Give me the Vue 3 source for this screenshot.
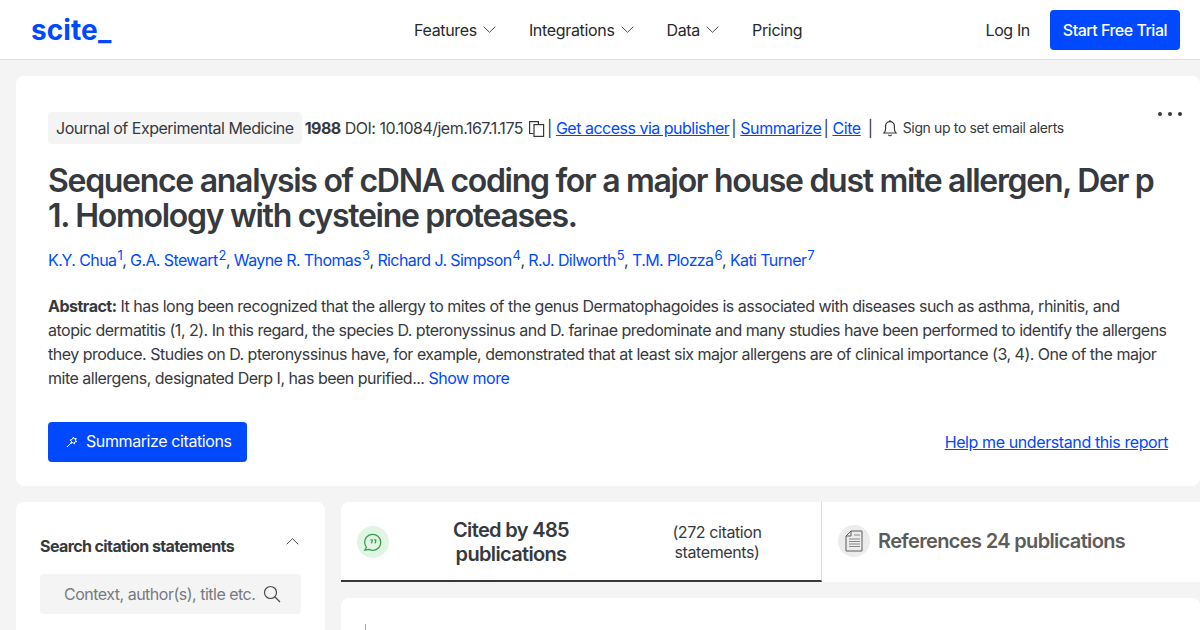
<template>
  <div class="page">
    <header class="topbar">
      <div class="logo">scite_</div>
      <nav class="nav">
        <a v-for="item in navItems" :key="item.label" class="nav-item">
          {{ item.label }}
          <svg v-if="item.menu" width="13" height="7" viewBox="0 0 13 7" fill="none" stroke="#47494d" stroke-width="1">
            <path d="M.7.7l5.8 5.6L12.3.7" />
          </svg>
        </a>
      </nav>
      <div class="topbar-actions">
        <a class="login">Log In</a>
        <a class="trial">Start Free Trial</a>
      </div>
    </header>

    <main class="content">
      <section class="card paper">
        <div class="more"><span></span><span></span><span></span></div>
        <div class="meta">
          <span class="journal">Journal of Experimental Medicine</span>
          <b class="year">1988</b>
          <span class="doi">DOI: 10.1084/jem.167.1.175</span>
          <svg class="copy" width="17" height="17" viewBox="0 0 17 17" fill="none" stroke="#36393e" stroke-width="1.2">
            <path d="M5.5 13.5H1.6V1.6h8.8V4.5" />
            <rect x="6" y="4.6" width="9.6" height="11.8" />
          </svg>
          <span class="sep">|</span>
          <a class="link access">Get access via publisher</a>
          <span class="sep">|</span>
          <a class="link">Summarize</a>
          <span class="sep">|</span>
          <a class="link">Cite</a>
          <span class="sep wide">|</span>
          <svg class="bell" width="16" height="18" viewBox="0 0 16 18" fill="none" stroke="#36393e" stroke-width="1.2">
            <path d="M2 14c1.2-1.2 1.6-2.4 1.6-4.6V7a4.4 4.4 0 0 1 8.8 0v2.4c0 2.2.4 3.4 1.6 4.6z" />
            <path d="M8 1v1.4M6.4 15.6a1.7 1.7 0 0 0 3.2 0" />
          </svg>
          <span class="alerts">Sign up to set email alerts</span>
        </div>

        <h1 class="title">Sequence analysis of cDNA coding for a major house dust mite allergen, Der p 1. Homology with cysteine proteases.</h1>

        <div class="authors">
          <template v-for="(author, index) in authors" :key="author">
            <a class="author">{{ author }}</a><sup>{{ index + 1 }}</sup><span v-if="index < authors.length - 1" class="comma">, </span>
          </template>
        </div>

        <p class="abstract">
          <b>Abstract:</b> It has long been recognized that the allergy to mites of the genus Dermatophagoides is associated with diseases such as asthma, rhinitis, and<br />
          atopic dermatitis (1, 2). In this regard, the species D. pteronyssinus and D. farinae predominate and many studies have been performed to identify the allergens<br />
          they produce. Studies on D. pteronyssinus have, for example, demonstrated that at least six major allergens are of clinical importance (3, 4). One of the major<br />
          mite allergens, designated Derp I, has been purified... <a class="show-more">Show more</a>
        </p>

        <div class="paper-actions">
          <button class="summarize">
            <svg width="13" height="13" viewBox="0 0 13 13" fill="none" stroke="#fff" stroke-width="1">
              <path d="M1 12l5-5" />
              <path d="M7.5 2l.6 1.9 2.2-.5-1 1.9 1.6 1.3-2.1.3-.4 2-1.5-1.4-1.9.8.5-2-1.5-1.3 2-.4z" />
            </svg>
            Summarize citations
          </button>
          <a class="help">Help me understand this report</a>
        </div>
      </section>

      <div class="lower">
        <aside class="card search-card">
          <div class="search-head">
            <span>Search citation statements</span>
            <svg width="13" height="7" viewBox="0 0 13 7" fill="none" stroke="#47494d" stroke-width="1">
              <path d="M.7 6.3L6.5.7l5.8 5.6" />
            </svg>
          </div>
          <div class="search-box">
            <span>Context, author(s), title etc.</span>
            <svg width="18" height="18" viewBox="0 0 18 18" fill="none" stroke="#47494d" stroke-width="1.2">
              <circle cx="7.5" cy="7.5" r="6" />
              <path d="M12 12l5 5" />
            </svg>
          </div>
        </aside>

        <div class="results">
          <div class="tabs">
            <div class="tab active">
              <span class="tab-icon green">
                <svg width="20" height="20" viewBox="0 0 20 20" fill="none" stroke="#2f9e44" stroke-width="1.2">
                  <path d="M3.4 15.2A8 8 0 1 1 6 17.4l-4.2.8z" />
                  <path d="M7.6 7.8h1.6v1c0 1.2-.3 1.9-1 2.5M11.2 7.8h1.6v1c0 1.2-.3 1.9-1 2.5" />
                </svg>
              </span>
              <span class="tab-title">Cited by 485 publications</span>
              <span class="tab-note">(272 citation statements)</span>
            </div>
            <div class="tab">
              <span class="tab-icon grey">
                <svg width="18" height="22" viewBox="0 0 18 22" fill="none" stroke="#5c5c5c" stroke-width="1">
                  <path d="M6 1h11v20H1V6z" />
                  <path d="M6 1v5H1" />
                  <path d="M9 5h6M4 9h11M4 11.5h11M4 14h11M4 16.5h11" stroke-width="1.2" stroke="#888" />
                </svg>
              </span>
              <span class="tab-title muted">References 24 publications</span>
            </div>
          </div>
          <div class="card statements">
            <span class="tick"></span>
          </div>
        </div>
      </div>
    </main>
  </div>
</template>

<script setup>
const navItems = [
  { label: 'Features', menu: true },
  { label: 'Integrations', menu: true },
  { label: 'Data', menu: true },
  { label: 'Pricing', menu: false }
];

const authors = [
  'K.Y. Chua',
  'G.A. Stewart',
  'Wayne R. Thomas',
  'Richard J. Simpson',
  'R.J. Dilworth',
  'T.M. Plozza',
  'Kati Turner'
];
</script>

<style>
html,
body {
  margin: 0;
  overflow: hidden;
}
</style>

<style scoped>
.page {
  width: 1200px;
  height: 630px;
  overflow: hidden;
  background: #f4f4f4;
  color: #36393e;
  font-family: Inter, "Noto Sans", sans-serif;
  font-size: 16px;
  letter-spacing: -0.4px;
}

.topbar {
  display: flex;
  align-items: center;
  height: 59px;
  padding: 0 20px 0 31px;
  background: #fff;
  border-bottom: 1px solid #ddd;
}

.logo {
  flex: 0 0 383px;
  color: #0049ff;
  font-size: 28px;
  font-weight: 700;
  letter-spacing: 0.1px;
}

.nav {
  display: flex;
  gap: 33px;
}

.nav-item {
  display: flex;
  align-items: center;
  gap: 6px;
  color: #27292d;
  letter-spacing: -0.33px;
}

.topbar-actions {
  display: flex;
  align-items: center;
  gap: 20px;
  margin-left: auto;
}

.login {
  color: #27292d;
}

.trial {
  padding: 10px 13px;
  border-radius: 4px;
  background: #0049ff;
  color: #fff;
  font-weight: 500;
  letter-spacing: -0.5px;
}

.content {
  padding: 16px 0 0 16px;
}

.card {
  background: #fff;
  border-radius: 8px;
}

.paper {
  position: relative;
  height: 410px;
  padding: 36px 32px 0;
  box-sizing: border-box;
}

.more {
  position: absolute;
  top: 36px;
  right: 18px;
  display: flex;
  gap: 6px;
}

.more span {
  width: 4px;
  height: 4px;
  border-radius: 50%;
  background: #36393e;
}

.meta {
  display: flex;
  align-items: center;
  white-space: nowrap;
  line-height: 32px;
}

.journal {
  padding: 0 8px;
  border-radius: 4px;
  background: #f4f4f4;
  letter-spacing: -0.5px;
}

.year {
  margin-left: 3px;
  letter-spacing: -0.5px;
}

.doi {
  margin-left: 4px;
  letter-spacing: -0.5px;
}

.copy {
  margin-left: 5px;
}

.sep {
  margin: 0 2px;
}

.sep.wide {
  margin: 0 9px 0 7px;
}

.link {
  margin-left: 2px;
  color: #0049ff;
  text-decoration: underline;
}

.link.access {
  letter-spacing: -0.5px;
}

.alerts {
  margin-left: 5px;
  font-size: 14px;
  letter-spacing: -0.35px;
}

.title {
  margin: 19px 0 0;
  font-size: 32px;
  line-height: 35px;
  font-weight: 600;
  letter-spacing: -1.3px;
}

.authors {
  margin-top: 15px;
  line-height: 24px;
  color: #36393e;
  letter-spacing: -0.6px;
}

.author {
  color: #0049ff;
}

sup {
  margin-left: 1px;
  color: #0049ff;
  font-size: 13px;
  line-height: 0;
}

.abstract {
  margin: 22px 0 0;
  line-height: 24px;
  letter-spacing: -0.5px;
  white-space: nowrap;
}

.show-more {
  color: #0049ff;
}

.paper-actions {
  display: flex;
  align-items: center;
  justify-content: space-between;
  margin-top: 32px;
}

.summarize {
  display: flex;
  align-items: center;
  gap: 7px;
  height: 40px;
  padding: 0 15px 2px 18px;
  border: 0;
  border-radius: 4px;
  background: #0049ff;
  color: #fff;
  font: inherit;
  letter-spacing: inherit;
}

.help {
  color: #0049ff;
  text-decoration: underline;
}

.lower {
  display: flex;
  gap: 16px;
  margin-top: 16px;
}

.search-card {
  flex: none;
  width: 309px;
  height: 200px;
  padding: 34px 24px 0;
  box-sizing: border-box;
}

.search-head {
  display: flex;
  align-items: center;
  justify-content: space-between;
  font-weight: 700;
  letter-spacing: -0.6px;
}

.search-head svg {
  margin: 0 2px 10px 0;
}

.search-box {
  display: flex;
  align-items: center;
  gap: 8px;
  height: 40px;
  margin-top: 18px;
  padding-left: 24px;
  border-radius: 4px;
  background: #f4f4f4;
  color: #767a82;
  letter-spacing: -0.5px;
}

.results {
  flex: 1;
}

.tabs {
  display: flex;
  height: 80px;
  background: #fff;
  border-radius: 8px 0 0 0;
}

.tab {
  display: flex;
  align-items: center;
  padding: 0 16px 2px;
  box-sizing: border-box;
}

.tab.active {
  width: 481px;
  flex: none;
  padding-top: 2px;
  padding-bottom: 0;
  border-bottom: 2px solid #36393e;
  border-right: 1px solid #ddd;
}

.tab-icon {
  display: flex;
  align-items: center;
  justify-content: center;
  flex: none;
  width: 32px;
  height: 32px;
  border-radius: 50%;
  margin-right: 8px;
}

.tab-icon.green {
  background: #e0f5e3;
}

.tab-icon.grey {
  background: #ececec;
}

.tab-title {
  font-size: 20px;
  font-weight: 600;
  line-height: 24px;
  letter-spacing: -0.65px;
}

.tab.active .tab-title {
  width: 228px;
  text-align: center;
}

.tab-title.muted {
  color: #5c5c5c;
}

.tab-note {
  width: 150px;
  margin-left: 17px;
  line-height: 20px;
  text-align: center;
}

.statements {
  position: relative;
  height: 100px;
  margin-top: 16px;
}

.tick {
  position: absolute;
  top: 26px;
  left: 24px;
  width: 1px;
  height: 6px;
  background: #aaa;
}
</style>
